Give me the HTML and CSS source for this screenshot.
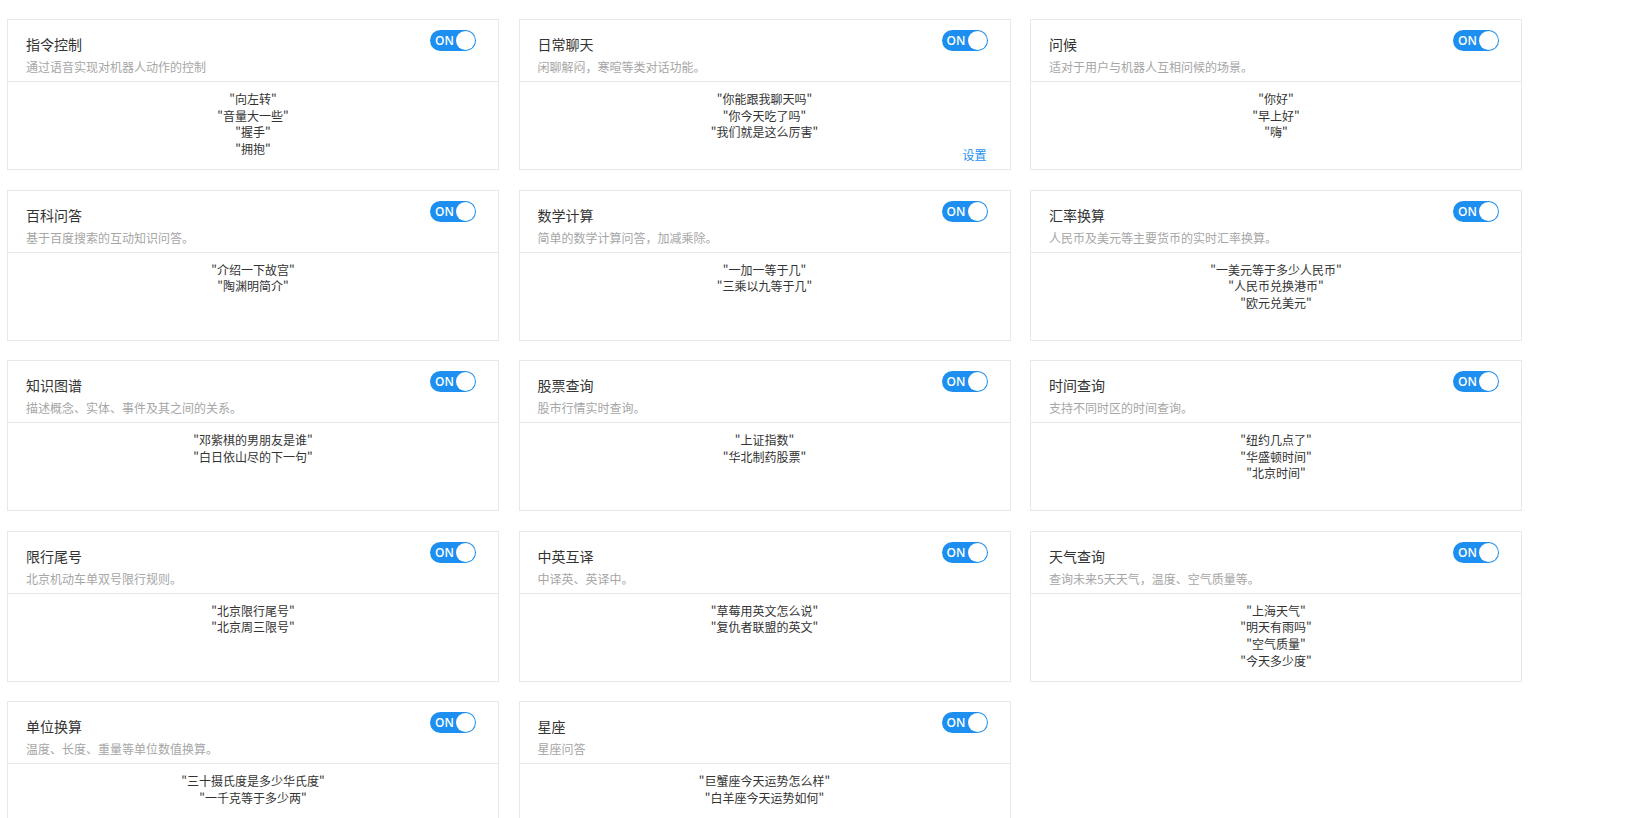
FILE: index.html
```html
<!DOCTYPE html>
<html lang="zh-CN">
<head>
<meta charset="utf-8">
<title>技能</title>
<link rel="stylesheet" href="styles.css">
</head>
<body>
<div class="grid">
  <div class="card">
    <div class="card-head"><div class="info"><div class="title">指令控制</div><div class="desc">通过语音实现对机器人动作的控制</div></div><span class="switch">ON</span></div>
    <div class="card-body"><p>"向左转"</p><p>"音量大一些"</p><p>"握手"</p><p>"拥抱"</p></div>
  </div>
  <div class="card">
    <div class="card-head"><div class="info"><div class="title">日常聊天</div><div class="desc">闲聊解闷，寒暄等类对话功能。</div></div><span class="switch">ON</span></div>
    <div class="card-body"><p>"你能跟我聊天吗"</p><p>"你今天吃了吗"</p><p>"我们就是这么厉害"</p><a class="setting" href="#">设置</a></div>
  </div>
  <div class="card">
    <div class="card-head"><div class="info"><div class="title">问候</div><div class="desc">适对于用户与机器人互相问候的场景。</div></div><span class="switch">ON</span></div>
    <div class="card-body"><p>"你好"</p><p>"早上好"</p><p>"嗨"</p></div>
  </div>

  <div class="card">
    <div class="card-head"><div class="info"><div class="title">百科问答</div><div class="desc">基于百度搜索的互动知识问答。</div></div><span class="switch">ON</span></div>
    <div class="card-body"><p>"介绍一下故宫"</p><p>"陶渊明简介"</p></div>
  </div>
  <div class="card">
    <div class="card-head"><div class="info"><div class="title">数学计算</div><div class="desc">简单的数学计算问答，加减乘除。</div></div><span class="switch">ON</span></div>
    <div class="card-body"><p>"一加一等于几"</p><p>"三乘以九等于几"</p></div>
  </div>
  <div class="card">
    <div class="card-head"><div class="info"><div class="title">汇率换算</div><div class="desc">人民币及美元等主要货币的实时汇率换算。</div></div><span class="switch">ON</span></div>
    <div class="card-body"><p>"一美元等于多少人民币"</p><p>"人民币兑换港币"</p><p>"欧元兑美元"</p></div>
  </div>

  <div class="card">
    <div class="card-head"><div class="info"><div class="title">知识图谱</div><div class="desc">描述概念、实体、事件及其之间的关系。</div></div><span class="switch">ON</span></div>
    <div class="card-body"><p>"邓紫棋的男朋友是谁"</p><p>"白日依山尽的下一句"</p></div>
  </div>
  <div class="card">
    <div class="card-head"><div class="info"><div class="title">股票查询</div><div class="desc">股市行情实时查询。</div></div><span class="switch">ON</span></div>
    <div class="card-body"><p>"上证指数"</p><p>"华北制药股票"</p></div>
  </div>
  <div class="card">
    <div class="card-head"><div class="info"><div class="title">时间查询</div><div class="desc">支持不同时区的时间查询。</div></div><span class="switch">ON</span></div>
    <div class="card-body"><p>"纽约几点了"</p><p>"华盛顿时间"</p><p>"北京时间"</p></div>
  </div>

  <div class="card">
    <div class="card-head"><div class="info"><div class="title">限行尾号</div><div class="desc">北京机动车单双号限行规则。</div></div><span class="switch">ON</span></div>
    <div class="card-body"><p>"北京限行尾号"</p><p>"北京周三限号"</p></div>
  </div>
  <div class="card">
    <div class="card-head"><div class="info"><div class="title">中英互译</div><div class="desc">中译英、英译中。</div></div><span class="switch">ON</span></div>
    <div class="card-body"><p>"草莓用英文怎么说"</p><p>"复仇者联盟的英文"</p></div>
  </div>
  <div class="card">
    <div class="card-head"><div class="info"><div class="title">天气查询</div><div class="desc">查询未来5天天气，温度、空气质量等。</div></div><span class="switch">ON</span></div>
    <div class="card-body"><p>"上海天气"</p><p>"明天有雨吗"</p><p>"空气质量"</p><p>"今天多少度"</p></div>
  </div>

  <div class="card">
    <div class="card-head"><div class="info"><div class="title">单位换算</div><div class="desc">温度、长度、重量等单位数值换算。</div></div><span class="switch">ON</span></div>
    <div class="card-body"><p>"三十摄氏度是多少华氏度"</p><p>"一千克等于多少两"</p></div>
  </div>
  <div class="card">
    <div class="card-head"><div class="info"><div class="title">星座</div><div class="desc">星座问答</div></div><span class="switch">ON</span></div>
    <div class="card-body"><p>"巨蟹座今天运势怎么样"</p><p>"白羊座今天运势如何"</p></div>
  </div>
</div>
</body>
</html>
```

FILE: styles.css
```css
html, body {
  margin: 0;
  padding: 0;
  background: #fff;
}
body {
  font-family: "Noto Sans CJK SC", "Noto Sans", sans-serif;
  color: #333;
}
.grid {
  display: grid;
  grid-template-columns: repeat(3, 492px);
  column-gap: 19.5px;
  row-gap: 19.5px;
  padding: 19px 0 0 7px;
}
.card {
  box-sizing: border-box;
  height: 151px;
  border: 1px solid #e8e8e8;
  display: flex;
  flex-direction: column;
  background: #fff;
}
.card-head {
  box-sizing: border-box;
  height: 62px;
  border-bottom: 1px solid #e8e8e8;
  display: flex;
  justify-content: space-between;
  align-items: flex-start;
  padding: 0 22px 0 18px;
}
.info {
  padding-top: 14px;
}
.title {
  font-size: 14px;
  line-height: 21px;
  color: #333;
}
.desc {
  font-size: 12px;
  line-height: 20px;
  margin-top: 2px;
  color: #a6a6a6;
}
.switch {
  box-sizing: border-box;
  margin-top: 10px;
  width: 46px;
  height: 21px;
  border-radius: 11px;
  background: #1d8ff0;
  color: #fff;
  font-family: "Open Sans", "Liberation Sans", sans-serif;
  font-size: 12px;
  font-weight: 600;
  line-height: 21px;
  padding-left: 5px;
  position: relative;
}
.switch::after {
  content: "";
  position: absolute;
  top: 1px;
  right: 1px;
  width: 19px;
  height: 19px;
  box-sizing: border-box;
  border-radius: 50%;
  background: #fff;
}
.card-body {
  flex: 1;
  display: flex;
  flex-direction: column;
  align-items: center;
  padding: 9px 23px 6px;
}
.card-body p {
  margin: 0;
  font-size: 12px;
  line-height: 16.7px;
  color: #333;
}
.setting {
  margin-top: auto;
  align-self: flex-end;
  font-size: 12px;
  line-height: 17px;
  color: #1d8ff0;
  text-decoration: none;
}
```
